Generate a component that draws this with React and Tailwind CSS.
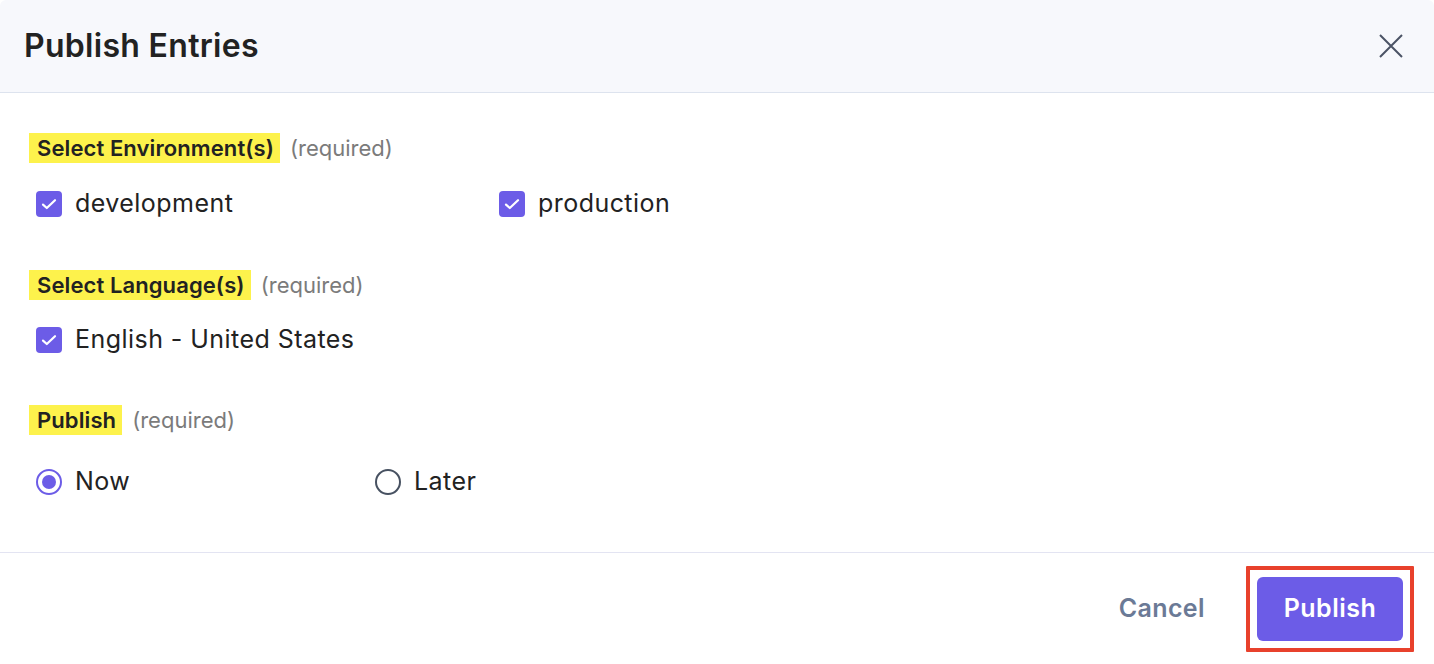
import { useState } from "react";

const Checkbox = ({ checked }) => (
  <span
    className={`flex h-[26px] w-[26px] shrink-0 items-center justify-center rounded-[4px] ${
      checked ? "bg-[#6c5ce7]" : "border-2 border-[#475161] bg-white"
    }`}
  >
    {checked && (
      <svg width="18" height="18" viewBox="0 0 18 18" fill="none">
        <path
          d="M3 9.6l3.8 3.4L15 5.2"
          stroke="white"
          strokeWidth="2.2"
          strokeLinecap="round"
          strokeLinejoin="round"
        />
      </svg>
    )}
  </span>
);

const Radio = ({ checked }) => (
  <span
    className={`flex h-[26px] w-[26px] shrink-0 items-center justify-center rounded-full border-2 ${
      checked ? "border-[#6c5ce7]" : "border-[#475161]"
    } bg-white`}
  >
    {checked && <span className="h-[14px] w-[14px] rounded-full bg-[#6c5ce7]" />}
  </span>
);

const SectionLabel = ({ children }) => (
  <div className="flex h-[30px] items-center">
    <span className="flex h-[30px] items-center bg-[#fdf24c] pl-[8px] pr-[6px] text-[22px] font-semibold tracking-[0.1px] text-[#222222]">
      {children}
    </span>
    <span className="ml-[10px] text-[22px] text-[#7b7b7b]">(required)</span>
  </div>
);

const Option = ({ control, label, width }) => (
  <label className={`flex h-[30px] items-center gap-[13px] ${width}`}>
    {control}
    <span className="text-[25px] tracking-[0.45px] text-[#222222]">{label}</span>
  </label>
);

export default function App() {
  const [when] = useState("now");

  return (
    <div
      className="flex h-[664px] w-[1434px] flex-col overflow-hidden rounded-[6px] bg-white"
      style={{ fontFamily: "Inter, 'Noto Sans', sans-serif" }}
    >
      {/* Header */}
      <div className="flex h-[93px] shrink-0 items-center justify-between border-b border-[#dde3ee] bg-[#f7f8fc] pl-[24px] pr-[31px]">
        <h2 className="text-[32px] font-semibold tracking-[0.3px] text-[#222222]">Publish Entries</h2>
        <button className="flex h-[24px] w-[24px] items-center justify-center">
          <svg width="24" height="24" viewBox="0 0 24 24" fill="none">
            <path d="M1 1l22 22M23 1L1 23" stroke="#4b5365" strokeWidth="2" />
          </svg>
        </button>
      </div>

      {/* Body */}
      <div className="flex-1 pl-[29px] pt-[40px]">
        <SectionLabel>Select Environment(s)</SectionLabel>
        <div className="mt-[26px] flex pl-[7px]">
          <Option width="w-[463px]" control={<Checkbox checked />} label="development" />
          <Option control={<Checkbox checked />} label="production" />
        </div>

        <div className="mt-[51px]">
          <SectionLabel>Select Language(s)</SectionLabel>
        </div>
        <div className="mt-[25px] flex pl-[7px]">
          <Option control={<Checkbox checked />} label="English - United States" />
        </div>

        <div className="mt-[50px]">
          <SectionLabel>Publish</SectionLabel>
        </div>
        <div className="mt-[32px] flex pl-[7px]">
          <Option width="w-[339px]" control={<Radio checked={when === "now"} />} label="Now" />
          <Option control={<Radio checked={when === "later"} />} label="Later" />
        </div>
      </div>

      {/* Footer */}
      <div className="flex h-[112px] shrink-0 items-center justify-end gap-[41px] border-t border-[#e3e4f2] pr-[20px]">
        <button className="text-[25px] font-semibold tracking-[0.4px] text-[#6b7a96]">Cancel</button>
        <span className="rounded-[1px] border-[4px] border-[#e8412c] p-[7px]">
          <button className="flex h-[64px] w-[146px] items-center justify-center rounded-[6px] bg-[#6c5ce7] text-[25px] font-semibold tracking-[0.5px] text-white">
            Publish
          </button>
        </span>
      </div>
    </div>
  );
}
